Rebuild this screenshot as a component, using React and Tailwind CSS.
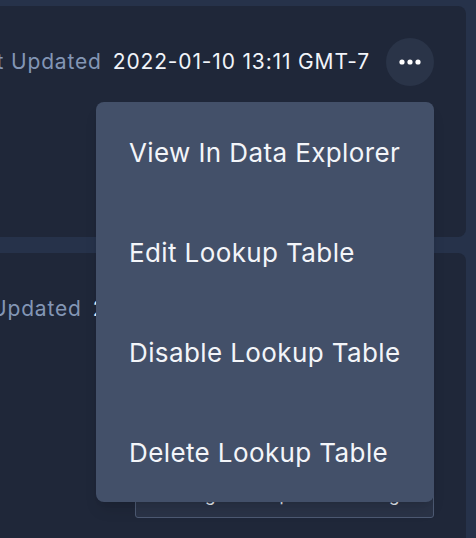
import { useState } from 'react'

const menuItems = ['View In Data Explorer', 'Edit Lookup Table', 'Disable Lookup Table', 'Delete Lookup Table']

function DotsButton({ onClick }) {
  return (
    <button
      onClick={onClick}
      className="flex h-12 w-12 shrink-0 items-center justify-center rounded-full bg-[#2a3448] text-white"
    >
      <svg width="22" height="6" viewBox="0 0 22 6" fill="currentColor">
        <circle cx="3" cy="3" r="2.6" />
        <circle cx="11" cy="3" r="2.6" />
        <circle cx="19" cy="3" r="2.6" />
      </svg>
    </button>
  )
}

function UpdatedRow({ value, children, shift }) {
  return (
    <div className={`flex items-center justify-end gap-4 ${shift ? 'pr-5' : ''}`}>
      <div className="flex items-baseline gap-[11px] whitespace-nowrap text-[21px] tracking-[0.04em]">
        <span className="text-[#8396b5]">Last Updated</span>
        <span className="text-[#f1f4f9]">{value}</span>
      </div>
      {children}
    </div>
  )
}

export default function App() {
  const [open, setOpen] = useState(true)

  return (
    <div className="h-[538px] w-[476px] overflow-hidden bg-[#26324a] pt-[6px] pr-[10px] font-['Inter',sans-serif]">
      <div className="flex flex-col gap-4">
        <section className="relative h-[231px] rounded-r-lg bg-[#1f2739] pt-8 pr-8">
          <UpdatedRow value="2022-01-10 13:11 GMT-7">
            <div className="relative">
              <DotsButton onClick={() => setOpen(!open)} />
              {open && (
                <div className="absolute top-[64px] right-0 z-10 w-[338px] rounded-lg bg-[#435069] shadow-lg">
                  {menuItems.map((item) => (
                    <button key={item} className="flex h-[100px] w-full items-center pl-[33px] text-left text-[26px] tracking-[0.015em] whitespace-nowrap text-[#f3f5f9]">
                      {item}
                    </button>
                  ))}
                </div>
              )}
            </div>
          </UpdatedRow>
        </section>

        <section className="flex h-[300px] flex-col rounded-r-lg bg-[#1f2739] pt-8 pr-8">
          <UpdatedRow value="2022-01-10 13:11 GMT-7" shift>
            <DotsButton />
          </UpdatedRow>
          <div className="mt-[137px] flex justify-end">
            <button className="h-[48px] w-[299px] rounded-[3px] border border-[#4d5a73] bg-[#2a3347] pt-[3px] text-[17px] text-[#e5e9f0]">
              Manage Lookup Table Settings
            </button>
          </div>
        </section>
      </div>
    </div>
  )
}
